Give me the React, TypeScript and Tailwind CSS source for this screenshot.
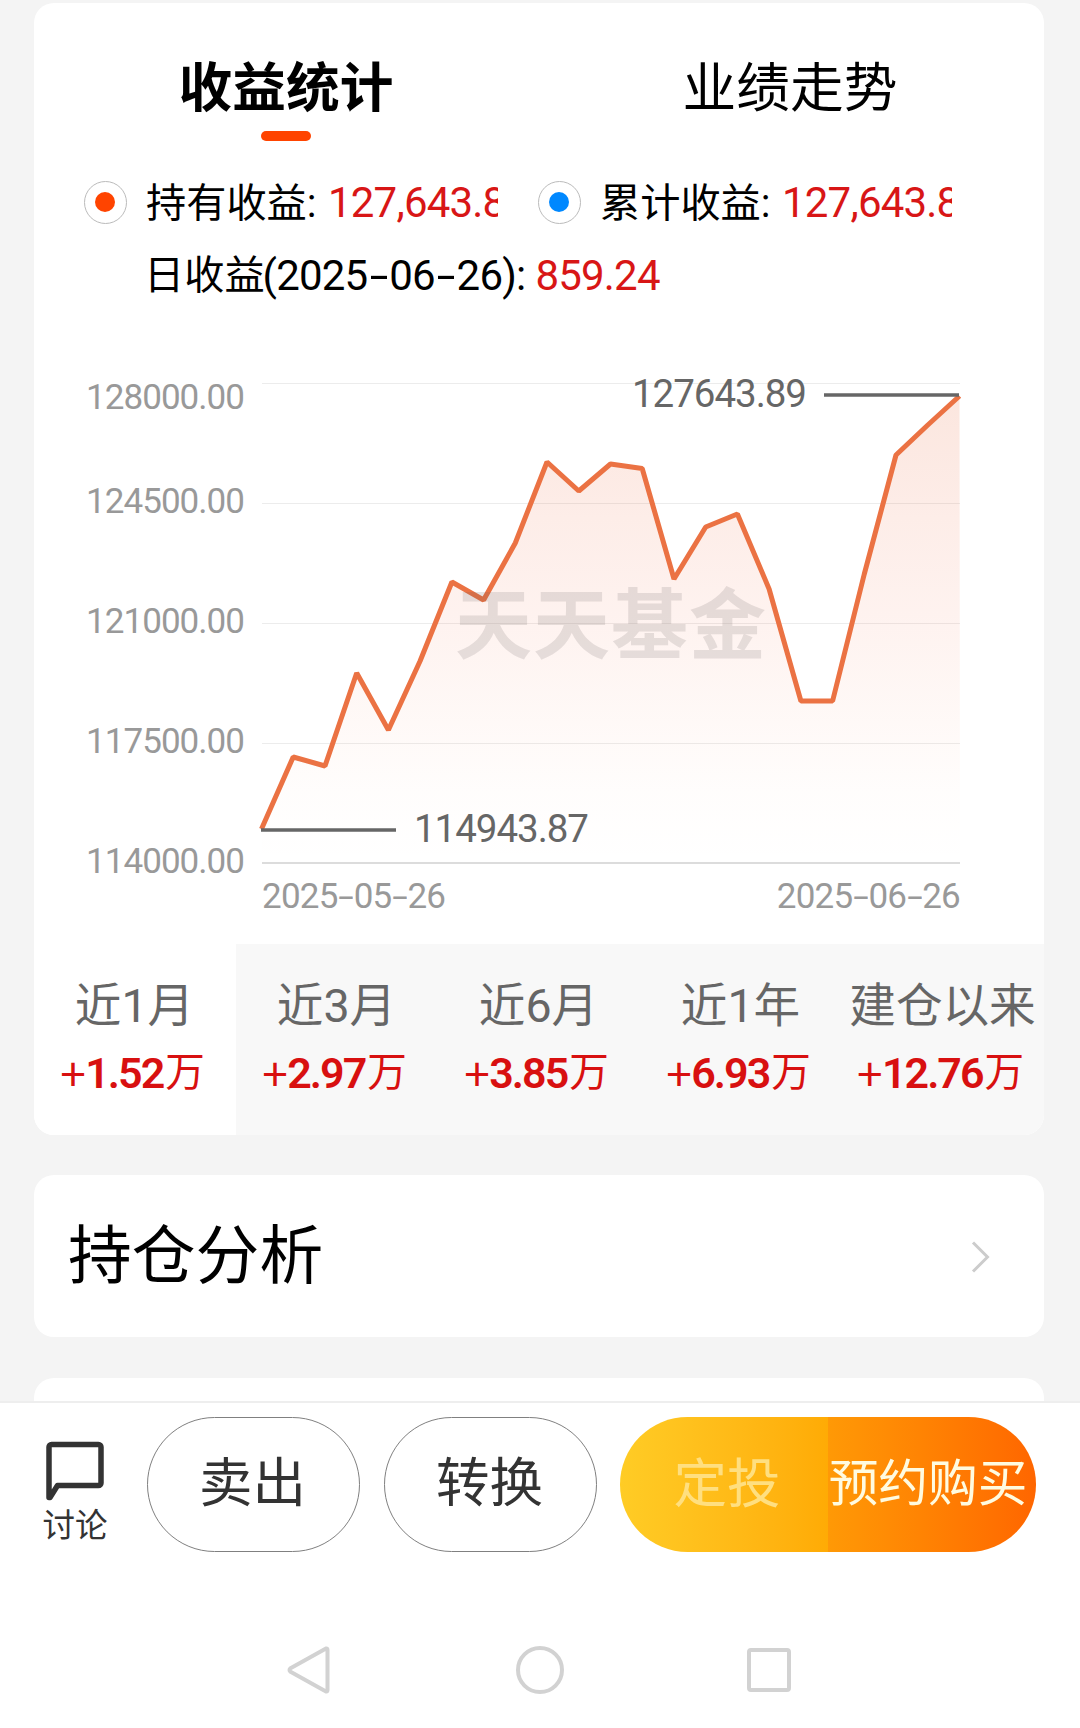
import clsx from 'clsx';

interface Period {
  label: string;
  amount: string;
}

const periods: Period[] = [
  { label: '近1月', amount: '1.52' },
  { label: '近3月', amount: '2.97' },
  { label: '近6月', amount: '3.85' },
  { label: '近1年', amount: '6.93' },
  { label: '建仓以来', amount: '12.76' },
];

// y is the label baseline, line is the grid line it belongs to
const yAxis = [
  { text: '128000.00', y: 409, line: 383.5 },
  { text: '124500.00', y: 513, line: 503.5 },
  { text: '121000.00', y: 633, line: 623.5 },
  { text: '117500.00', y: 753, line: 743.5 },
  { text: '114000.00', y: 873, line: 863 },
];

const PLOT_LEFT = 262;
const PLOT_RIGHT = 960;
const PLOT_BOTTOM = 863;

const series = [
  829, 757, 766, 673, 730, 661, 582, 600, 543, 462, 491, 464, 468.5, 579, 527, 514, 589, 701, 701, 574, 455, 425, 396,
];

function pointsOf(values: number[]): string {
  const step = (PLOT_RIGHT - PLOT_LEFT) / (values.length - 1);
  return values.map((v, i) => `${(PLOT_LEFT - 0.5 + i * step).toFixed(1)},${v}`).join(' ');
}

function LegendItem({ label, value, dot }: { label: string; value: string; dot: string }) {
  return (
    <div className="flex w-[454px] items-center">
      <span className="flex h-[43px] w-[43px] shrink-0 items-center justify-center rounded-full border border-[#bbb] pr-px pb-px">
        <span className={clsx('h-5 w-5 rounded-full', dot)} />
      </span>
      <div className="ml-[19px] flex w-[352px] overflow-hidden whitespace-nowrap pt-px text-[40.2px] leading-[57px]">
        <span className="w-[182px] shrink-0">{label}:</span>
        <span className="text-[42px] leading-[55px] tracking-[-0.8px] text-[#d81616]">{value}</span>
      </div>
    </div>
  );
}

function Dash({ wide }: { wide?: boolean }) {
  return <span className={clsx('inline-block scale-x-[1.6]', wide ? 'mx-[5.5px]' : 'mx-[3.5px]')}>-</span>;
}

function ProfitChart() {
  const line = pointsOf(series);

  return (
    <svg width="1010" height="584" viewBox="34 360 1010 584" className="block">
      <defs>
        <linearGradient id="area" gradientUnits="userSpaceOnUse" x1="0" y1="396" x2="0" y2="863">
          <stop offset="0" stopColor="#e8683a" stopOpacity="0.165" />
          <stop offset="0.5" stopColor="#f56a45" stopOpacity="0.08" />
          <stop offset="0.85" stopColor="#f87a45" stopOpacity="0.015" />
          <stop offset="1" stopColor="#ff8855" stopOpacity="0" />
        </linearGradient>
      </defs>

      {yAxis.map((tick, i) => (
        <g key={tick.text}>
          <line
            x1={PLOT_LEFT}
            x2={PLOT_RIGHT}
            y1={tick.line}
            y2={tick.line}
            stroke={i === yAxis.length - 1 ? '#dcdcdc' : '#ececec'}
            strokeWidth={i === yAxis.length - 1 ? 2 : 1}
          />
          <text x="86" y={tick.y} textLength="159" fontSize="35" fill="#999">
            {tick.text}
          </text>
        </g>
      ))}

      <polygon points={`${PLOT_LEFT},${PLOT_BOTTOM} ${line} ${PLOT_RIGHT},${PLOT_BOTTOM}`} fill="url(#area)" />
      <polyline points={line} fill="none" stroke="#eb7243" strokeWidth="5" strokeLinejoin="bevel" />

      <text x="455" y="653" textLength="311" fontSize="77" fontWeight="700" fill="#6b6464" fillOpacity="0.17">
        天天基金
      </text>

      <line x1="824" x2="959" y1="395" y2="395" stroke="#666" strokeWidth="3.5" />
      <text x="632" y="407" textLength="175" fontSize="38.5" fill="#666">
        127643.89
      </text>
      <line x1="261" x2="396" y1="830" y2="830" stroke="#666" strokeWidth="3.5" />
      <text x="414" y="842" textLength="175" fontSize="38.5" fill="#666">
        114943.87
      </text>

      <foreignObject x="262" y="872" width="698" height="50">
        <div className="flex justify-between text-[35px] leading-[50px] tracking-[-0.75px] text-[#999]">
          <span>2025<Dash />05<Dash />26</span>
          <span>2025<Dash />06<Dash />26</span>
        </div>
      </foreignObject>
    </svg>
  );
}

function PeriodTabs() {
  return (
    <div className="grid h-[191px] grid-cols-5">
      {periods.map((p, i) => (
        <div
          key={p.label}
          className={clsx(
            'flex flex-col items-center whitespace-nowrap pr-[3px] pt-[34px]',
            i === 0 ? 'bg-white' : 'bg-[#f8f8f8]',
          )}
        >
          <span className="-mr-[2px] text-[46.6px] leading-[56px] text-[#666]">{p.label}</span>
          <span className="mt-[11px] flex text-[39.5px] leading-[56px] text-[#d81010]">
            <span className="-ml-[2px] w-[25px] font-['Noto_Sans_CJK_SC',sans-serif] text-[46px] leading-[52px]">+</span>
            <span className="text-[43px] font-semibold tracking-[-2px]">{p.amount}</span>
            <span className="ml-[2px]">万</span>
          </span>
        </div>
      ))}
    </div>
  );
}

function BottomBar() {
  return (
    <div className="flex h-[327px] shrink-0 flex-col border-t-2 border-[#eee] bg-white">
      <div className="flex h-[165px] items-start pt-[14px] text-[53.5px] text-[#333]">
        <div className="flex w-[147px] flex-col items-center pl-[3px] pt-[24px]">
          <svg width="60" height="60" viewBox="0 0 60 60" fill="none" stroke="#333" strokeWidth="5.5" strokeLinejoin="round">
            <path d="M4 56.500V6a2.500 2.500 0 0 1 2.500-2.500h47a2.500 2.500 0 0 1 2.500 2.500v36a2.500 2.500 0 0 1-2.500 2.500H12.500L5 56.500z" />
          </svg>
          <span className="mt-[5px] text-[32.5px] leading-[40px]">讨论</span>
        </div>
        <button className="h-[135px] w-[213px] rounded-full border border-[#808080] pr-[2px]">卖出</button>
        <button className="ml-[24px] h-[135px] w-[213px] rounded-full border border-[#808080] pr-[2px]">转换</button>
        <div className="ml-[23px] flex h-[135px] w-[416px] overflow-hidden rounded-full">
          <button className="w-[208px] bg-linear-to-r from-[#ffcc25] to-[#ffab05] pl-[6px] pt-[2px] text-[#ffdf80]">
            定投
          </button>
          <button className="w-[208px] whitespace-nowrap bg-linear-to-r from-[#ff9906] to-[#ff6600] pr-[8px] text-[49.7px] text-[#fffbe0]">
            预约购买
          </button>
        </div>
      </div>

      <div className="flex flex-1 items-center justify-center pt-[44px]">
        <svg width="520" height="56" viewBox="280 1642 520 56" fill="none" stroke="#d2d2d2" strokeWidth="4" strokeLinejoin="round">
          <path d="M326 1648.500 L290.500 1668.200 Q288.500 1670 290.500 1671.800 L326 1691.500 Q327.500 1692 327.500 1690 V1650 Q327.500 1648 326 1648.500 Z" />
          <circle cx="540" cy="1670" r="22" />
          <rect x="749" y="1650" width="40" height="40" rx="2" />
        </svg>
      </div>
    </div>
  );
}

export default function App() {
  return (
    <div className="flex h-[1728px] w-[1080px] flex-col overflow-hidden bg-[#f4f4f4] font-[Roboto,'Noto_Sans_CJK_SC',sans-serif] text-black">
      <div className="flex flex-1 flex-col overflow-hidden pl-[34px] pt-[3px]">
        <section className="h-[1132px] w-[1010px] shrink-0 overflow-hidden rounded-[20px] bg-white">
          <div className="grid h-[166px] grid-cols-2 pr-[2px] pt-[56px] text-[53.7px] leading-[60px]">
            <div className="flex flex-col items-center gap-[12px]">
              <span className="font-bold">收益统计</span>
              <span className="h-[10px] w-[50px] rounded-full bg-[#ff4400]" />
            </div>
            <div className="text-center">业绩走势</div>
          </div>

          <div className="h-[191px] pl-[50px]">
            <div className="flex h-[67px] items-center">
              <LegendItem label="持有收益" value="127,643.89" dot="bg-[#ff4400]" />
              <LegendItem label="累计收益" value="127,643.89" dot="bg-[#0088ff]" />
            </div>
            <div className="flex pl-[60px] pt-[2px] text-[40.2px] leading-[76px]">
              <span>日收益</span>
              <span className="-ml-[2px] text-[42px] tracking-[-0.8px]">
                (2025<Dash wide />06<Dash wide />26):
              </span>
              <span className="ml-[10px] text-[42px] tracking-[-0.8px] text-[#d81616]">859.24</span>
            </div>
          </div>

          <ProfitChart />
          <PeriodTabs />
        </section>

        <section className="mt-[40px] flex h-[162px] w-[1010px] shrink-0 items-center justify-between rounded-[20px] bg-white pl-[34px] pr-[52px]">
          <h2 className="pt-[2px] text-[63.8px] leading-none">持仓分析</h2>
          <svg width="22" height="36" viewBox="0 0 22 36" fill="none" stroke="#ccc" strokeWidth="3">
            <path d="M3 4.500l14.500 14.500L3 33.500" />
          </svg>
        </section>

        <section className="mt-[41px] h-[60px] w-[1010px] shrink-0 rounded-t-[20px] bg-white" />
      </div>

      <BottomBar />
    </div>
  );
}
